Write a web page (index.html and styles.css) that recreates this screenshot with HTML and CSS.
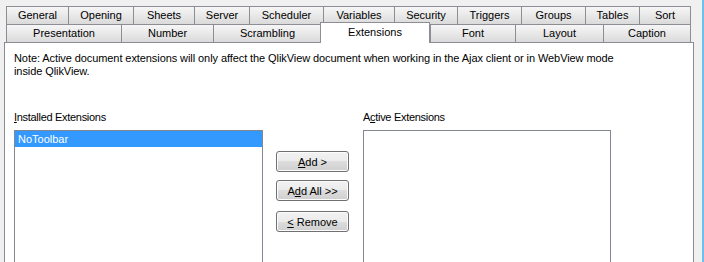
FILE: index.html
```html
<!doctype html>
<html lang="en">
<head>
<meta charset="UTF-8">
<title>Document Properties - Extensions</title>
<link rel="stylesheet" href="styles.css">
</head>
<body>
<div id="wrap">
	<div id="tabs"><!-- two rows of tabs, selected one in the front row -->
		<div class="row row1">
			<span class="tab">General</span>
			<span class="tab">Opening</span>
			<span class="tab">Sheets</span>
			<span class="tab">Server</span>
			<span class="tab">Scheduler</span>
			<span class="tab">Variables</span>
			<span class="tab">Security</span>
			<span class="tab">Triggers</span>
			<span class="tab">Groups</span>
			<span class="tab">Tables</span>
			<span class="tab">Sort</span>
		</div>
		<div class="row row2">
			<span class="tab">Presentation</span>
			<span class="tab">Number</span>
			<span class="tab">Scrambling</span>
			<span class="tab on">Extensions</span>
			<span class="tab">Font</span>
			<span class="tab">Layout</span>
			<span class="tab">Caption</span>
		</div>
	</div>

	<div id="panel">
		<p class="note">Note: Active document extensions will only affect the QlikView document when working in the Ajax client or in WebView mode<br/>inside QlikView.</p>
		<div class="lists">
			<div class="col installed">
				<label><u>I</u>nstalled Extensions</label>
				<div class="listbox">
					<div class="item sel">NoToolbar</div>
				</div>
			</div>
			<div class="btns">
				<button class="b1"><u>A</u>dd &gt;</button>
				<button class="b2">A<u>d</u>d All &gt;&gt;</button>
				<button class="b3"><u>&lt;</u> Remove</button>
			</div>
			<div class="col active">
				<label>A<u>c</u>tive Extensions</label>
				<div class="listbox"></div>
			</div>
		</div>
	</div>
</div>
</body>
</html>
```

FILE: styles.css
```css
body,p{ margin:0;padding:0; }
body{ background:#f0f0f0;font:11px "Liberation Sans",Arial,sans-serif;color:#000;overflow:hidden; }
#wrap{ width:704px;height:262px;box-sizing:border-box;border-right:2px solid #6bc0ec;padding-top:6px;overflow:hidden; }

/* tabs */
#tabs{ margin-left:6px;width:685px; }
.row{ display:grid;height:18px; }
.row1{ grid-template-columns:62px 65px 61px 55px 74px 71px 63px 64px 64px 54px 52px; }
.row2{ grid-template-columns:115px 92px 108px 109px 85px 88px 88px; }
.tab{ border:1px solid #8c8e94;border-bottom:none;border-right:none;background:linear-gradient(#f6f6f6,#e7e7e7 55%,#dadada);text-align:center;line-height:17px;white-space:nowrap;overflow:hidden; }
.tab:last-child{ border-right:1px solid #8c8e94; }
.tab.on{ background:#fff;margin:-2px 0 -1px -1px;border-right:1px solid #8c8e94;line-height:19px;position:relative;z-index:1; }

/* page */
#panel{ margin-left:4px;width:690px;height:240px;box-sizing:border-box;border:1px solid #898c95;background:#fff; }
.note{ padding:9px 0 0 9px;line-height:13px;letter-spacing:-0.08px; }
.lists{ display:flex;align-items:flex-start;padding-left:9px;margin-top:33px; }
.col label{ display:block;line-height:13px;margin-bottom:6px;white-space:nowrap;letter-spacing:-0.3px; }
.listbox{ height:140px;box-sizing:border-box;border:1px solid #828790;background:#fff; }
.installed{ width:249px; }
.active{ width:248px; }
.item{ height:16px;line-height:17px;padding-left:3px; }
.item.sel{ background:#3399ff;color:#fff; }

.btns{ display:flex;flex-direction:column;width:73px;margin:40px 14px 0 13px; }
.btns button{ height:21px;width:73px;padding:0;border:1px solid #707070;border-radius:3px;background:linear-gradient(#f2f2f2,#ebebeb 50%,#dddddd 50%,#cfcfcf);box-shadow:inset 0 0 0 1px #fcfcfc;font:inherit;color:#000; }
.btns .b2{ margin-top:8px; }
.btns .b3{ margin-top:10px; }
```
